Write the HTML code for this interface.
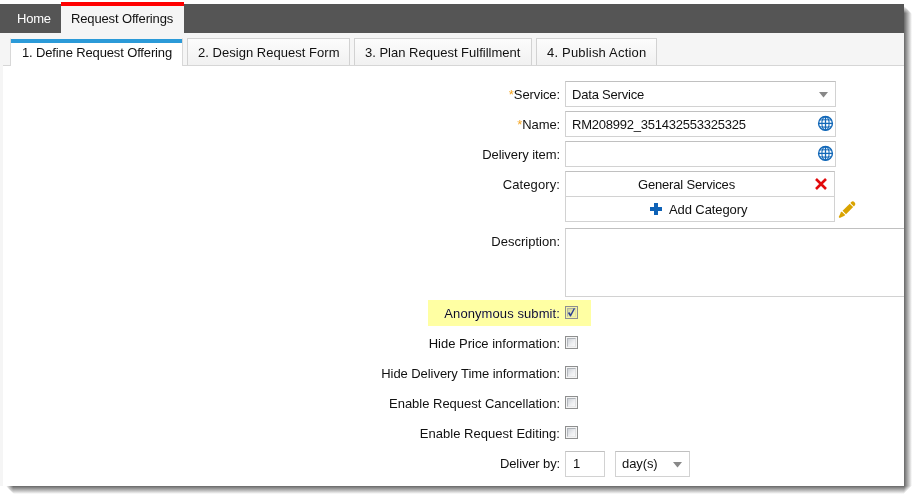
<!DOCTYPE html>
<html>
<head>
<meta charset="utf-8">
<title>Request Offerings</title>
<style>
html,body{margin:0;padding:0;background:#fff;}
body{width:919px;height:501px;position:relative;overflow:hidden;font-family:"Liberation Sans",Arial,sans-serif;font-size:13px;color:#111;}
.sh{position:absolute;}
#shR{left:904px;top:14px;width:8px;height:472px;background:linear-gradient(to right,rgba(0,0,0,0.6),rgba(0,0,0,0));}
#shRt{left:904px;top:6px;width:8px;height:8px;background:linear-gradient(to right,rgba(0,0,0,0.6),rgba(0,0,0,0));-webkit-mask-image:linear-gradient(to bottom,transparent,#000 90%);mask-image:linear-gradient(to bottom,transparent,#000 90%);clip-path:polygon(0 0,100% 100%,0 100%);}
#shB{left:14px;top:486px;width:890px;height:8px;background:linear-gradient(to bottom,rgba(0,0,0,0.6),rgba(0,0,0,0));}
#shBl{left:6px;top:486px;width:8px;height:8px;background:linear-gradient(to bottom,rgba(0,0,0,0.6),rgba(0,0,0,0));-webkit-mask-image:linear-gradient(to right,transparent,#000 90%);mask-image:linear-gradient(to right,transparent,#000 90%);clip-path:polygon(0 0,100% 0,100% 100%);}
#shC{left:904px;top:486px;width:8px;height:8px;background:linear-gradient(135deg,rgba(0,0,0,0.6),rgba(0,0,0,0) 50%);}
#frame{position:absolute;left:0;top:0;width:904px;height:486px;overflow:hidden;}
#topbar{position:absolute;left:0;top:4px;width:904px;height:29px;background:#555;}
.t{position:absolute;white-space:nowrap;line-height:16px;height:16px;}
#ro{position:absolute;left:61px;top:2px;width:123px;height:31px;background:#f5f5f5;}
#ro .red{position:absolute;left:0;top:0;width:100%;height:4px;background:#f00;}
#subbar{position:absolute;left:0;top:33px;width:904px;height:33px;background:#f5f5f5;}
#subline{position:absolute;left:3px;top:65px;width:901px;height:1px;background:#d6d6d6;}
.st{position:absolute;top:38px;height:27px;box-sizing:border-box;border:1px solid #d2d2d2;border-bottom:none;background:linear-gradient(#fcfcfc,#f1f1f1);}
.st.act{background:#fff;height:28px;border-color:#d8d8d8;border-top-color:#f5f5f5;}
.st.act b{position:absolute;left:0;top:0;right:0;height:4px;background:#2b9ad8;}
#content{position:absolute;left:3px;top:66px;width:901px;height:420px;background:#fff;}
#leftstrip{position:absolute;left:0;top:66px;width:3px;height:420px;background:#f5f5f5;}
.lbl{position:absolute;right:344px;white-space:nowrap;height:16px;line-height:16px;color:#111;}
.req{color:#f5a623;}
.inp{position:absolute;box-sizing:border-box;border:1px solid #d2d2d2;border-top-color:#c0c0c0;background:#fff;height:26px;}
.arrow{position:absolute;width:9px;height:6px;}
.cb{position:absolute;left:565px;width:13px;height:13px;box-sizing:border-box;border:1px solid #8e8f8f;background:#f4f4f4;}
.cb i{position:absolute;left:1px;top:1px;width:9px;height:9px;box-sizing:border-box;border:1px solid;border-color:#aeb3b9 #dfe0e2 #e9e9ea #b4b8be;background:linear-gradient(135deg,#cdd1d7,#eeeff1 60%,#f8f8f8);}
#hl{position:absolute;left:428px;top:300px;width:163px;height:26px;background:#ffffa3;mix-blend-mode:darken;}
</style>
</head>
<body>
<div class="sh" id="shR"></div>
<div class="sh" id="shB"></div>
<div class="sh" id="shC"></div>
<div class="sh" id="shRt"></div>
<div class="sh" id="shBl"></div>
<div id="frame">
  <div id="topbar"></div>
  <div class="t" style="left:17px;top:11px;color:#fff;letter-spacing:-0.2px;">Home</div>
  <div id="ro"><div class="red"></div></div>
  <div class="t" style="left:71px;top:11px;letter-spacing:-0.14px;">Request Offerings</div>
  <div id="subbar"></div>
  <div id="subline"></div>
  <div class="st act" style="left:10px;width:173px;"><b></b></div>
  <div class="st" style="left:187px;width:163px;"></div>
  <div class="st" style="left:354px;width:178px;"></div>
  <div class="st" style="left:536px;width:121px;"></div>
  <div class="t" style="left:22px;top:45px;letter-spacing:-0.14px;">1. Define Request Offering</div>
  <div class="t" style="left:198px;top:45px;letter-spacing:0.03px;">2. Design Request Form</div>
  <div class="t" style="left:365px;top:45px;letter-spacing:0px;">3. Plan Request Fulfillment</div>
  <div class="t" style="left:547px;top:45px;letter-spacing:0.19px;">4. Publish Action</div>
  <div id="content"></div>
  <div id="leftstrip"></div>

  <div class="lbl" style="top:87px;letter-spacing:-0.1px;"><span class="req">*</span>Service:</div>
  <div class="inp" style="left:565px;top:81px;width:271px;"></div>
  <div class="t" style="left:572px;top:87px;letter-spacing:-0.2px;">Data Service</div>
  <svg class="arrow" style="left:819px;top:92px;" viewBox="0 0 9 6"><path d="M0 0h9L4.5 5.6z" fill="#888"/></svg>

  <div class="lbl" style="top:117px;letter-spacing:-0.12px;"><span class="req">*</span>Name:</div>
  <div class="inp" style="left:565px;top:111px;width:271px;"></div>
  <div class="t" style="left:572px;top:117px;letter-spacing:-0.23px;">RM208992_351432553325325</div>
  <svg style="position:absolute;left:817px;top:115px;" width="17" height="17" viewBox="0 0 17 17"><g fill="none" stroke="#1268b8"><circle cx="8.5" cy="8.4" r="6.9" stroke-width="1.4"/><ellipse cx="8.5" cy="8.4" rx="3.6" ry="6.8" stroke-width="1.05"/><line x1="8.5" y1="1.6" x2="8.5" y2="15.2" stroke-width="1.3"/><line x1="1.6" y1="8.4" x2="15.4" y2="8.4" stroke-width="1.3"/><path d="M2.8 5.0Q8.5 4.4 14.2 5.0M2.8 11.8Q8.5 12.4 14.2 11.8" stroke-width="1.1"/></g></svg>

  <div class="lbl" style="top:147px;letter-spacing:-0.07px;">Delivery item:</div>
  <div class="inp" style="left:565px;top:141px;width:271px;"></div>
  <svg style="position:absolute;left:817px;top:145px;" width="17" height="17" viewBox="0 0 17 17"><g fill="none" stroke="#1268b8"><circle cx="8.5" cy="8.4" r="6.9" stroke-width="1.4"/><ellipse cx="8.5" cy="8.4" rx="3.6" ry="6.8" stroke-width="1.05"/><line x1="8.5" y1="1.6" x2="8.5" y2="15.2" stroke-width="1.3"/><line x1="1.6" y1="8.4" x2="15.4" y2="8.4" stroke-width="1.3"/><path d="M2.8 5.0Q8.5 4.4 14.2 5.0M2.8 11.8Q8.5 12.4 14.2 11.8" stroke-width="1.1"/></g></svg>

  <div class="lbl" style="top:177px;letter-spacing:0.11px;">Category:</div>
  <div class="inp" style="left:565px;top:171px;width:270px;height:51px;"></div>
  <div style="position:absolute;left:566px;top:196px;width:268px;height:1px;background:#d2d2d2;"></div>
  <div class="t" style="left:638px;top:177px;letter-spacing:-0.17px;">General Services</div>
  <div class="t" style="left:669px;top:202px;letter-spacing:-0.1px;">Add Category</div>
  <svg style="position:absolute;left:650px;top:203px;" width="12" height="12" viewBox="0 0 12 12"><path d="M4 0h4v4h4v4h-4v4h-4v-4h-4v-4h4z" fill="#0f62b6"/></svg>
  <svg style="position:absolute;left:814px;top:177px;" width="14" height="14" viewBox="0 0 14 14"><path d="M2 2L12 12M12 2L2 12" stroke="#e20a0c" stroke-width="2.6" fill="none"/></svg>
  <svg style="position:absolute;left:835px;top:198px;" width="25" height="25" viewBox="0 0 25 25"><g transform="translate(4.2,19.6) rotate(-45)" fill="#d9a300"><path d="M0 -0.7L5 -2.45H6.1V2.45H5L0 0.7z"/><rect x="7.2" y="-2.45" width="10.1" height="4.9"/><path d="M18.3 -2.45H19.5A2.2 2.45 0 0 1 19.5 2.45H18.3z"/></g></svg>

  <div class="lbl" style="top:234px;letter-spacing:0px;">Description:</div>
  <div class="inp" style="left:565px;top:228px;width:345px;height:69px;border-right:none;"></div>

  <div class="lbl" style="top:306px;letter-spacing:0.09px;">Anonymous submit:</div>
  <div class="cb" style="top:306px;"><i></i></div>
  <div id="hl"></div>
  <svg style="position:absolute;left:565px;top:306px;" width="13" height="13" viewBox="0 0 13 13"><path d="M2.9 6.9L4.3 5.9L5.6 8.1L8.9 2.1L10 2.7L5.9 10.5H5.1z" fill="#2c4093"/></svg>

  <div class="lbl" style="top:336px;letter-spacing:-0.01px;">Hide Price information:</div>
  <div class="cb" style="top:336px;"><i></i></div>
  <div class="lbl" style="top:366px;letter-spacing:-0.06px;">Hide Delivery Time information:</div>
  <div class="cb" style="top:366px;"><i></i></div>
  <div class="lbl" style="top:396px;letter-spacing:-0.01px;">Enable Request Cancellation:</div>
  <div class="cb" style="top:396px;"><i></i></div>
  <div class="lbl" style="top:426px;letter-spacing:0.03px;">Enable Request Editing:</div>
  <div class="cb" style="top:426px;"><i></i></div>

  <div class="lbl" style="top:456px;letter-spacing:-0.13px;">Deliver by:</div>
  <div class="inp" style="left:565px;top:451px;width:40px;"></div>
  <div class="t" style="left:573px;top:456px;">1</div>
  <div class="inp" style="left:615px;top:451px;width:75px;"></div>
  <div class="t" style="left:622px;top:456px;letter-spacing:-0.1px;">day(s)</div>
  <svg class="arrow" style="left:673.3px;top:462.2px;" viewBox="0 0 9 6"><path d="M0 0h9L4.5 5.6z" fill="#888"/></svg>
</div>
</body>
</html>
